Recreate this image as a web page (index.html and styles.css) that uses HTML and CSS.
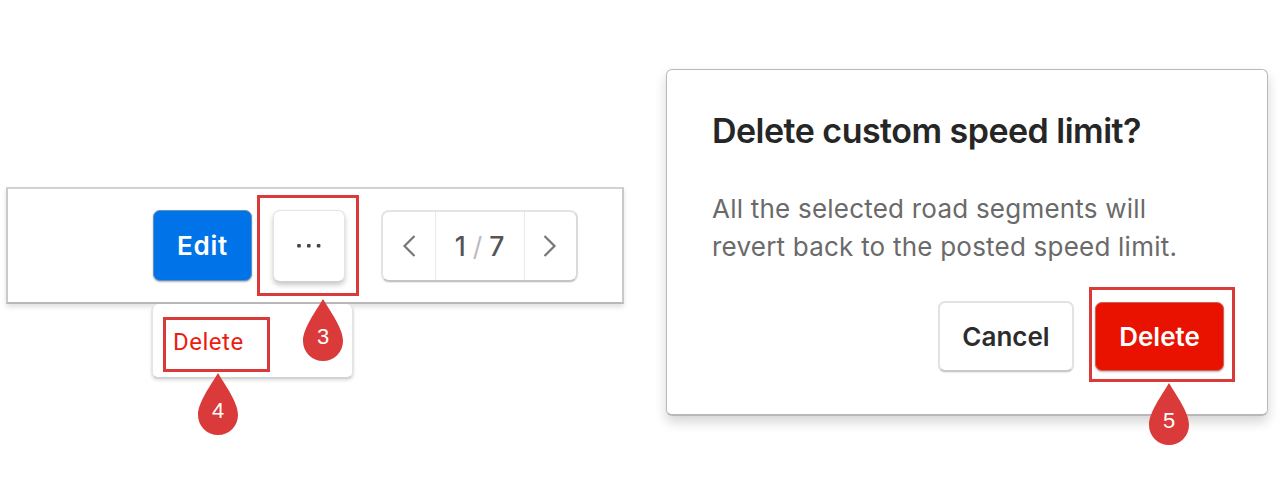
FILE: index.html
```html
<!DOCTYPE html>
<html lang="en">
<head>
<meta charset="utf-8">
<title>Delete custom speed limit</title>
<link rel="stylesheet" href="styles.css">
</head>
<body>
<main class="page">
  <section class="toolbar">
    <button class="btn btn-primary"><span class="edit-label">Edit</span></button>
    <div class="more-wrap">
      <button class="btn btn-more" aria-label="More">
        <svg width="26" height="6" viewBox="0 0 26 6" fill="#444"><rect x="1.2" y="1" width="3.6" height="3.6" rx=".8"/><rect x="11" y="1" width="3.6" height="3.6" rx=".8"/><rect x="20.8" y="1" width="3.6" height="3.6" rx=".8"/></svg>
      </button>
      <div class="mark mark-more"></div>
    </div>
    <div class="pager">
      <div class="pager-arrow"><svg width="14" height="24" viewBox="0 0 14 24"><path d="M12.5 2 2.5 12l10 10"/></svg></div>
      <div class="pager-count"><span>1</span><span class="slash">/</span><span>7</span></div>
      <div class="pager-arrow"><svg width="14" height="24" viewBox="0 0 14 24"><path d="M1.5 2l10 10-10 10"/></svg></div>
    </div>
    <div class="menu">
      <div class="menu-item"><span class="menu-label">Delete</span></div>
    </div>
    <div class="pin pin-3"><svg width="40" height="62" viewBox="0 0 40 62"><path d="M20 0C27 12 40 29 40 42a20 20 0 0 1-40 0C0 29 13 12 20 0Z"/></svg><span>3</span></div>
    <div class="pin pin-4"><svg width="40" height="62" viewBox="0 0 40 62"><path d="M20 0C27 12 40 29 40 42a20 20 0 0 1-40 0C0 29 13 12 20 0Z"/></svg><span>4</span></div>
  </section>

  <section class="dialog">
    <h1 class="title">Delete custom speed limit?</h1>
    <p class="message">All the selected road segments will<br>revert back to the posted speed limit.</p>
    <div class="actions">
      <button class="btn btn-cancel">Cancel</button>
      <div class="delete-wrap">
        <button class="btn btn-danger">Delete</button>
        <div class="mark mark-delete"></div>
        <div class="pin pin-5"><svg width="40" height="62" viewBox="0 0 40 62"><path d="M20 0C27 12 40 29 40 42a20 20 0 0 1-40 0C0 29 13 12 20 0Z"/></svg><span>5</span></div>
      </div>
    </div>
  </section>
</main>
</body>
</html>
```

FILE: styles.css
```css
* { box-sizing: border-box; }

body {
  margin: 0;
  background: #fff;
  font-family: Inter, "Liberation Sans", sans-serif;
}

.page {
  display: flex;
  align-items: flex-start;
  gap: 42px;
  height: 496px;
  padding: 69px 17px 0 6px;
  overflow: hidden;
}

.toolbar {
  position: relative;
  display: flex;
  width: 618px;
  height: 117px;
  margin-top: 118px;
  padding: 21px 0 0 145px;
  border: 2px solid #c9c9c9;
  border-top-color: #d2d2d2;
  border-bottom-color: #b8b8b8;
  box-shadow: 0 3px 5px rgba(0, 0, 0, 0.12);
}

.btn {
  display: flex;
  align-items: center;
  justify-content: center;
  margin: 0;
  padding: 0;
  border: 0;
  border-radius: 7px;
  font: 600 26px/32px Inter, "Liberation Sans", sans-serif;
  white-space: nowrap;
}

.btn-primary {
  width: 99px;
  height: 71px;
  color: #fff;
  background: #0073e8;
  border: 1px solid #5e91c6;
  box-shadow: 0 1px 2px rgba(0, 0, 0, 0.3);
}

.edit-label { letter-spacing: 0.7px; }

.more-wrap { position: relative; margin-left: 21px; }

.btn-more {
  width: 72px;
  height: 72px;
  background: #fff;
  border: 1px solid #e4e4e4;
  border-bottom-color: #d0d0d0;
  box-shadow: 0 3px 5px rgba(0, 0, 0, 0.22);
}

.pager {
  display: flex;
  width: 197px;
  height: 72px;
  margin-left: 36px;
  border: 2px solid #e4e4e4;
  border-right-color: #dadada;
  border-bottom-color: #c4c4c4;
  border-radius: 8px;
  box-shadow: 0 1px 1px rgba(0, 0, 0, 0.08);
}

.pager-arrow {
  display: flex;
  flex: 1;
  align-items: center;
  justify-content: center;
}

.pager-arrow path { fill: none; stroke: #777; stroke-width: 2.2; }

.pager-count {
  display: flex;
  align-items: center;
  justify-content: center;
  gap: 7px;
  width: 90px;
  border: solid #e9e9e9;
  border-width: 0 1px;
  color: #555;
  font-size: 26.5px;
  font-weight: 500;
}

.slash { color: #bbb; font-weight: 400; }

.menu {
  position: absolute;
  top: 115px;
  left: 143px;
  width: 203px;
  height: 75px;
  padding: 13px 0 0 12px;
  background: #fff;
  border: 2px solid #e4e5e5;
  border-top: 0;
  border-bottom-color: #d2d4d4;
  border-radius: 7px;
  box-shadow: 0 2px 3px rgba(0, 0, 0, 0.1);
}

.menu-item {
  display: flex;
  align-items: center;
  width: 107px;
  height: 55px;
  margin-left: -2px;
  padding: 0 0 6px 7px;
  border: 3px solid #da3a3a;
}

.menu-label {
  color: #ed1c10;
  font: 400 24px/28px Roboto, sans-serif;
  letter-spacing: 0.5px;
}

.mark { position: absolute; border: 3px solid #da3a3a; }
.mark-more { top: -15px; left: -16px; width: 102px; height: 101px; }
.mark-delete { top: -15px; left: -6px; width: 146px; height: 95px; }

.pin { position: absolute; width: 40px; height: 62px; }
.pin svg { display: block; fill: #da3a3a; }

.pin span {
  position: absolute;
  top: 25px;
  left: 0;
  width: 40px;
  color: #fff;
  font: 22px/26px "Liberation Sans", Arial, sans-serif;
  text-align: center;
}

.pin-3 { top: 110px; left: 295px; }
.pin-4 { top: 184px; left: 190px; }
.pin-5 { top: 81px; left: 54px; }

.dialog {
  width: 602px;
  height: 347px;
  padding: 41px 43px 0 45px;
  border: 1px solid #b9b9b9;
  border-bottom: 2px solid #b8b8b8;
  border-radius: 6px;
  box-shadow: 0 6px 12px rgba(0, 0, 0, 0.17);
}

.title {
  margin: 0;
  color: #262626;
  font-size: 34px;
  font-weight: 600;
  line-height: 40px;
  letter-spacing: -0.52px;
  white-space: nowrap;
}

.message {
  margin: 39px 0 0;
  color: #6a6a6a;
  font-size: 26px;
  line-height: 37.5px;
  letter-spacing: 0.22px;
  white-space: nowrap;
}

.actions {
  display: flex;
  justify-content: flex-end;
  gap: 21px;
  margin-top: 37px;
}

.btn-cancel {
  width: 136px;
  height: 71px;
  margin-top: -1px;
  color: #2c2c2c;
  background: #fff;
  border: 2px solid #e2e2e2;
  border-bottom-color: #c9c9c9;
  box-shadow: 0 1px 1px rgba(0, 0, 0, 0.08);
}

.delete-wrap { position: relative; }

.btn-danger {
  width: 129px;
  height: 69px;
  color: #fff;
  background: #e91100;
  border: 1px solid #cf6259;
  box-shadow: 0 1px 2px rgba(0, 0, 0, 0.3);
}
```
